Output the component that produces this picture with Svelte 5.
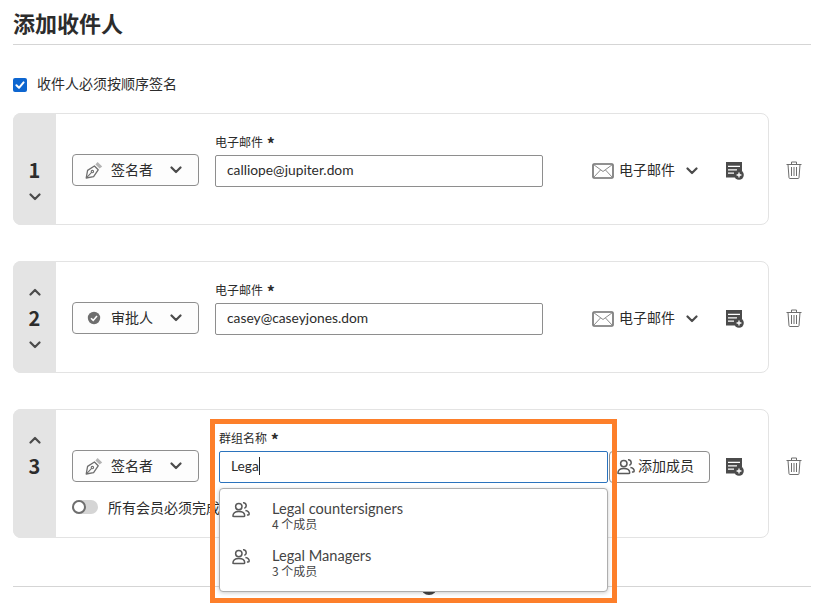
<script>
  const recipients = [
    { n: 1, role: 'sign', roleLabel: '签名者', email: 'calliope@jupiter.dom', up: false, down: true },
    { n: 2, role: 'approve', roleLabel: '审批人', email: 'casey@caseyjones.dom', up: true, down: true }
  ];
  const groups = [
    { name: 'Legal countersigners', count: '4 个成员' },
    { name: 'Legal Managers', count: '3 个成员' }
  ];
</script>

{#snippet chevron(up)}
  <svg class="chev" class:up viewBox="0 0 12 8" width="12" height="8">
    <path d="M1.5 1.5 6 6l4.5-4.5" fill="none" stroke="#4b4b4b" stroke-width="2.2" stroke-linecap="round" stroke-linejoin="round" />
  </svg>
{/snippet}

{#snippet pen()}
  <svg viewBox="0 0 18 18" width="18" height="18">
    <path d="M1.2 17 2.6 9.4 9.4 5l3.8 3.8-4.6 6.8z" fill="none" stroke="#6e6e6e" stroke-width="1.3" stroke-linejoin="round" />
    <path d="M1.6 16.6 6.6 11.4" stroke="#6e6e6e" stroke-width="1.1" />
    <circle cx="7.4" cy="10.6" r="1.2" fill="none" stroke="#6e6e6e" stroke-width="1.1" />
    <path d="M10.4 3.6 12.6 1l4.6 4.4-2.6 2.2z" fill="#b4b4b4" />
  </svg>
{/snippet}

{#snippet approve()}
  <svg viewBox="-2 -2 18 18" width="18" height="18">
    <circle cx="7" cy="7" r="6.2" fill="#6e6e6e" />
    <path d="M4 7.2 6.2 9.4 10 5" fill="none" stroke="#fff" stroke-width="1.6" />
  </svg>
{/snippet}

{#snippet people()}
  <svg viewBox="0 0 18 18" width="18" height="18" fill="none" stroke="#5a5a5a" stroke-width="1.5">
    <circle cx="6.8" cy="5.6" r="3.2" />
    <path d="M.9 15.4c0-3 1.9-4.9 5.9-4.9s5.9 2 5.9 4.2c0 .6-.4.9-1 .9H2.1c-.7 0-1.2-.3-1.2-.9z" />
    <path d="M11 1.8a2.9 2.9 0 0 1 1.3 5.6M13.4 9.6c2.4.4 3.8 1.8 3.8 3.5 0 .6-.4.9-1 .9h-1.3" />
  </svg>
{/snippet}

{#snippet channel()}
  <button class="channel">
    <svg viewBox="0 0 22 16" width="22" height="16">
      <rect x="1" y="1" width="20" height="14" rx="1" fill="none" stroke="#6e6e6e" stroke-width="1.6" />
      <path d="M1.5 1.5 11 8.5l9.5-7M1.5 14.5 8.5 7M20.5 14.5 13.5 7" fill="none" stroke="#8a8a8a" />
    </svg>
    <span>电子邮件</span>
    {@render chevron(false)}
  </button>
{/snippet}

{#snippet note()}
  <svg class="note" viewBox="0 0 18 18" width="18" height="18">
    <path d="M0 0h16v9a5 5 0 0 0-5.6 6.6H0z" fill="#4b4b4b" />
    <path d="M2 4.4h12M2 7.8h9M2 11.2h6" stroke="#fff" stroke-width="1.3" />
    <circle cx="13" cy="13" r="4.8" fill="#4b4b4b" />
    <path d="M13 10.6v4.8M10.6 13h4.8" stroke="#fff" stroke-width="1.3" />
  </svg>
{/snippet}

{#snippet trash()}
  <svg class="trash" viewBox="0 0 16 18" width="16" height="18" fill="none" stroke="#6e6e6e" stroke-width="1">
    <path d="M.5 3.5h15M5.5 3.5V1h5v2.5M2 3.5l1 13.2c0 .5.4.8.9.8h8.2c.5 0 .9-.3.9-.8L14 3.5" />
    <path d="M5.5 6v9M8 6v9M10.5 6v9" />
  </svg>
{/snippet}

<main>
  <h1>添加收件人</h1>

  <label class="order">
    <span class="box">
      <svg viewBox="0 0 14 14" width="14" height="14">
        <path d="M3.4 7.2 6 9.8l4.6-5.4" fill="none" stroke="#fff" stroke-width="2" stroke-linecap="round" stroke-linejoin="round" />
      </svg>
    </span>
    <span class="order-text">收件人必须按顺序签名</span>
  </label>

  {#each recipients as r}
    <section class="row">
      <div class="card">
        <div class="strip">
          <span class="slot">{#if r.up}{@render chevron(true)}{/if}</span>
          <strong>{r.n}</strong>
          <span class="slot">{#if r.down}{@render chevron(false)}{/if}</span>
        </div>
        <div class="body">
          <div class="fields">
            <button class="role">
              {#if r.role === 'sign'}{@render pen()}{:else}{@render approve()}{/if}
              <span>{r.roleLabel}</span>
              {@render chevron(false)}
            </button>
            <div class="field">
              <div class="label">电子邮件 <b>*</b></div>
              <div class="input">{r.email}</div>
            </div>
            {@render channel()}
            {@render note()}
          </div>
        </div>
      </div>
      {@render trash()}
    </section>
  {/each}

  <section class="row">
    <div class="card third">
      <div class="strip">
        <span class="slot">{@render chevron(true)}</span>
        <strong>3</strong>
        <span class="slot"></span>
      </div>
      <div class="body">
        <div class="fields">
          <button class="role">
            {@render pen()}
            <span>签名者</span>
            {@render chevron(false)}
          </button>
          <div class="field group">
            <div class="label">群组名称 <b>*</b></div>
            <div class="input focus">Lega<i class="caret"></i></div>
            <ul class="popup">
              {#each groups as g}
                <li>
                  {@render people()}
                  <div>
                    <div class="gname">{g.name}</div>
                    <div class="gcount">{g.count}</div>
                  </div>
                </li>
              {/each}
            </ul>
          </div>
          <button class="members">
            {@render people()}
            <span>添加成员</span>
          </button>
          {@render note()}
        </div>
        <div class="all">
          <span class="toggle"></span>
          所有会员必须完成此操作
        </div>
      </div>
      <div class="highlight"></div>
    </div>
    {@render trash()}
  </section>

  <div class="foot"><span class="dot"></span></div>
</main>

<style>
  :global(body) {
    background: #fff;
    overflow: hidden;
  }

  main {
    width: 798px;
    height: 609px;
    margin-left: 13px;
    font-family: "Noto Sans CJK SC", "Noto Sans", sans-serif;
    color: #2c2c2c;
    font-size: 14px;
    overflow: hidden;
  }

  h1 {
    margin: 0;
    height: 44px;
    line-height: 44px;
    font-size: 22px;
    font-weight: 700;
    border-bottom: 1px solid #d5d5d5;
  }

  .order {
    display: flex;
    align-items: center;
    gap: 10px;
    height: 20px;
    margin: 30px 0 18px;
    line-height: 20px;
  }

  .order-text {
    margin-bottom: 4px;
  }

  .box {
    width: 14px;
    height: 14px;
    border-radius: 2px;
    background: #0d66d0;
    display: flex;
  }

  .row {
    display: flex;
    align-items: flex-start;
    gap: 17px;
    margin-bottom: 36px;
  }

  .card {
    position: relative;
    display: flex;
    width: 756px;
    height: 112px;
    box-sizing: border-box;
    border: 1px solid #e3e3e3;
    border-radius: 8px;
  }

  .third {
    height: 129px;
  }

  .strip {
    width: 43px;
    flex: none;
    margin: -1px 0 -1px -1px;
    padding-top: 18px;
    background: #e4e4e4;
    border-radius: 8px 0 0 8px;
    display: flex;
    flex-direction: column;
    align-items: center;
  }

  .strip strong {
    height: 27px;
    line-height: 26px;
    font-size: 20px;
  }

  .slot {
    height: 26px;
    display: flex;
    align-items: center;
  }

  .chev {
    display: block;
    flex: none;
  }

  .chev.up {
    transform: rotate(180deg);
  }

  .body {
    flex: 1;
    padding: 21px 0 0 16px;
  }

  .fields {
    display: flex;
    align-items: flex-end;
  }

  button {
    font: inherit;
    color: inherit;
    background: none;
    border: 0;
    padding: 0;
    display: flex;
    align-items: center;
    height: 32px;
  }

  button span {
    margin-bottom: 4px;
  }

  .role {
    width: 127px;
    box-sizing: border-box;
    margin-bottom: 1px;
    padding-left: 12px;
    border: 1px solid #8e8e8e;
    border-radius: 4px;
    background: #fdfdfd;
  }

  .role span {
    width: 42px;
    margin: 0 17px 2px 8px;
    white-space: nowrap;
  }

  .field {
    position: relative;
    width: 328px;
    margin-left: 16px;
  }

  .label {
    height: 20px;
    line-height: 14px;
    font-size: 12px;
  }

  .label b {
    margin-left: 1px;
    font-size: 16px;
    font-weight: 700;
    line-height: 14px;
    vertical-align: -3px;
  }

  .input {
    height: 32px;
    box-sizing: border-box;
    padding-left: 11px;
    font-family: Lato, "Noto Sans CJK SC", sans-serif;
    font-size: 13.8px;
    line-height: 28px;
    border: 1px solid #8e8e8e;
    border-radius: 2px;
    background: #fff;
  }

  .group {
    width: 389px;
    margin-left: 20px;
  }

  .focus {
    border-color: #2b73bd;
  }

  .caret {
    display: inline-block;
    width: 1px;
    height: 18px;
    vertical-align: -4px;
    background: #222;
  }

  .popup {
    position: absolute;
    z-index: 2;
    top: 57px;
    left: 0;
    right: 0;
    height: 104px;
    box-sizing: border-box;
    margin: 0;
    padding: 3px 0 0;
    list-style: none;
    background: #fff;
    border: 1px solid #aeaeae;
    border-radius: 4px;
    box-shadow: 0 1px 4px rgba(0, 0, 0, 0.2);
  }

  .popup li {
    display: flex;
    align-items: center;
    gap: 22px;
    height: 47px;
    padding-left: 12px;
  }

  .popup svg {
    margin-bottom: 12px;
  }

  .gname {
    font-family: Lato, "Noto Sans CJK SC", sans-serif;
    font-size: 14.6px;
    line-height: 16px;
    color: #444;
  }

  .gcount {
    font-size: 12px;
    line-height: 13px;
    color: #444;
  }

  .channel {
    margin: 0 0 0 49px;
    gap: 5px;
    white-space: nowrap;
  }

  .channel .chev {
    margin-left: 6px;
  }

  .note {
    flex: none;
    margin: 0 0 7px 28px;
  }

  .trash {
    margin-top: 48px;
  }

  .members {
    flex: none;
    width: 101px;
    box-sizing: border-box;
    margin-left: 1px;
    padding-left: 7px;
    gap: 3px;
    border: 1px solid #8e8e8e;
    border-radius: 4px;
    white-space: nowrap;
  }

  .members + .note {
    margin-left: 16px;
  }

  .all {
    display: flex;
    align-items: center;
    gap: 10px;
    height: 20px;
    margin-top: 14px;
    white-space: nowrap;
  }

  .toggle {
    position: relative;
    width: 26px;
    height: 14px;
    border-radius: 7px;
    background: #d5d5d5;
  }

  .toggle::before {
    content: "";
    position: absolute;
    left: 0;
    top: 0;
    width: 14px;
    height: 14px;
    box-sizing: border-box;
    border: 2px solid #6e6e6e;
    border-radius: 50%;
    background: #fff;
  }

  .highlight {
    position: absolute;
    z-index: 3;
    left: 196px;
    top: 9px;
    width: 407px;
    height: 184px;
    box-sizing: border-box;
    border: 5px solid #fd7f2a;
    pointer-events: none;
  }

  .foot {
    position: relative;
    margin-top: 48px;
    border-top: 1px solid #d5d5d5;
  }

  .dot {
    position: absolute;
    left: 408px;
    top: -8px;
    width: 16px;
    height: 16px;
    border-radius: 50%;
    background: #444;
  }
</style>
